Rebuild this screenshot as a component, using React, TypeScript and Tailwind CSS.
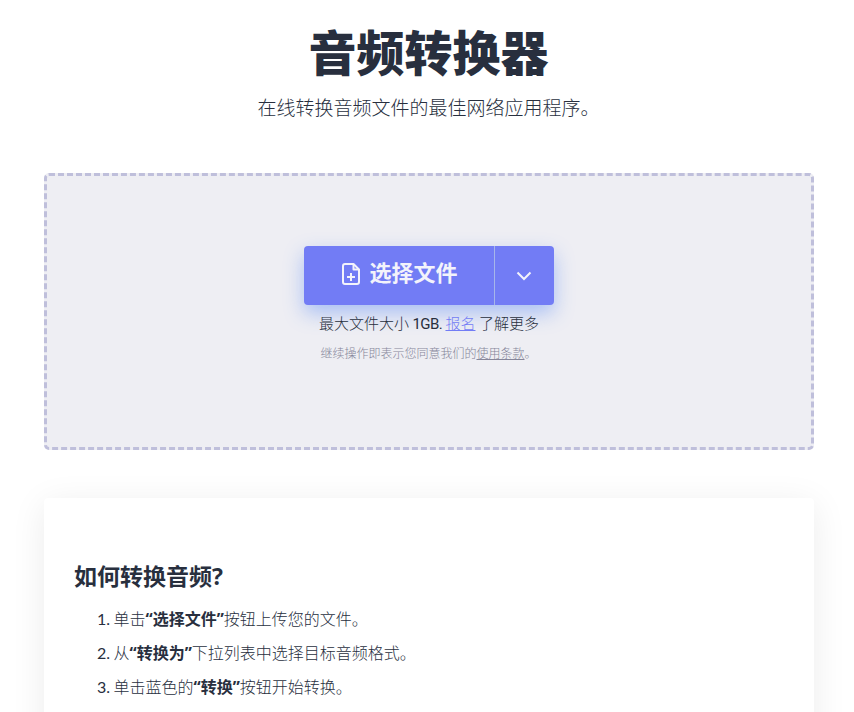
import type { ReactNode } from "react";

const steps: { id: number; content: ReactNode }[] = [
  {
    id: 1,
    content: (
      <>
        单击<strong className="font-bold">“选择文件”</strong>按钮上传您的文件。
      </>
    ),
  },
  {
    id: 2,
    content: (
      <>
        从<strong className="font-bold">“转换为”</strong>下拉列表中选择目标音频格式。
      </>
    ),
  },
  {
    id: 3,
    content: (
      <>
        单击蓝色的<strong className="font-bold">“转换”</strong>按钮开始转换。
      </>
    ),
  },
];

function FilePlusIcon() {
  return (
    <svg
      className="mb-1"
      width="20"
      height="24"
      viewBox="0 0 20 24"
      fill="none"
      stroke="currentColor"
      strokeWidth="2"
      strokeLinejoin="round"
    >
      <path d="M12.5 2H4a2 2 0 0 0-2 2v16a2 2 0 0 0 2 2h12a2 2 0 0 0 2-2V7.5z" />
      <path d="M12.5 2v5.500h5.500" />
      <path d="M10 11v8M6 15h8" />
    </svg>
  );
}

function ChevronIcon() {
  return (
    <svg
      className="mr-0.5"
      width="16"
      height="10"
      viewBox="0 0 16 10"
      fill="none"
      stroke="currentColor"
      strokeWidth="2"
    >
      <path d="M1.500 1.500l6.500 6.500 6.500-6.500" />
    </svg>
  );
}

function UploadBox() {
  return (
    <section className="mt-[50px] flex h-[277px] flex-col items-center rounded-[5px] border-[3px] border-dashed border-[#bfbfdb] bg-[#eeeef3] pt-[70px]">
      <div className="flex h-[59px] w-[250px] rounded-[4px] bg-[#727cf5] text-[#f3f3fb] shadow-[0_8px_20px_rgba(62,121,247,0.4)]">
        <button className="flex w-[190px] items-center justify-center gap-2 pl-px text-[22px] font-bold">
          <FilePlusIcon />
          <span className="mb-1.5">选择文件</span>
        </button>
        <button className="flex flex-1 items-center justify-center border-l border-[#a6b6ea]">
          <ChevronIcon />
        </button>
      </div>
      <p className="mt-1.5 text-[15px] leading-6 [word-spacing:-0.5px]">
        最大文件大小{" "}
        <span className="font-['Roboto'] font-normal tracking-[-0.6px]">1GB.</span>{" "}
        <a href="#" className="text-[#727cf5] underline">
          报名
        </a>{" "}
        了解更多
      </p>
      <p className="mt-2 pr-px text-[12px] leading-5 text-[#86869a]">
        继续操作即表示您同意我们的
        <a href="#" className="underline">
          使用条款
        </a>
        。
      </p>
    </section>
  );
}

export default function App() {
  return (
    <div className="h-[712px] overflow-hidden bg-white font-['Open_Sans','Noto_Sans_CJK_SC',sans-serif] font-light text-[#282f3e]">
      <main lang="zh-CN" className="ml-11 w-[770px] pt-[18px]">
        <h1 className="pr-px text-center text-[48px] leading-[70px] font-black">音频转换器</h1>
        <p className="mt-[5px] pr-px text-center text-[19px] leading-[30px]">
          在线转换音频文件的最佳网络应用程序。
        </p>

        <UploadBox />

        <section className="mt-12 h-[300px] rounded-[4px] bg-white px-[30px] pt-[61px] shadow-[0_6px_35px_rgba(0,0,0,0.08)]">
          <h2 className="text-[23px] leading-[34px] font-bold">如何转换音频?</h2>
          <ol className="mt-[9px] text-[16px] leading-[34px]">
            {steps.map((step) => (
              <li key={step.id} className="flex">
                <span className="w-10 pr-1 text-right font-['Lato'] font-normal">
                  {step.id}.
                </span>
                <span className="-ml-[0.5px]">{step.content}</span>
              </li>
            ))}
          </ol>
        </section>
      </main>
    </div>
  );
}
